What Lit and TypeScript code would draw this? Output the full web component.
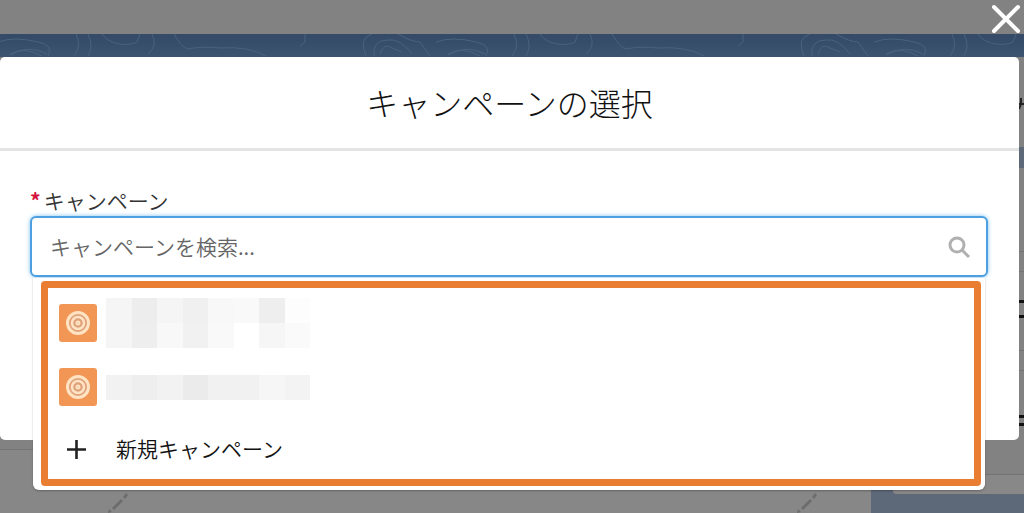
import { LitElement, html, svg, css } from "lit";
import { customElement, state } from "lit/decorators.js";

interface Campaign {
  id: string;
  rows: string[][];
}

const CAMPAIGNS: Campaign[] = [
  {
    id: "campaign-1",
    rows: [
      ["#f5f5f5", "#ededed", "#f5f5f5", "#f0f0f0", "#f8f8f8", "#f9f9f9", "#eeeeee", "#fdfdfd"],
      ["#f5f5f5", "#eeeeee", "#f8f8f8", "#f1f1f1", "#f9f9f9", "#ffffff", "#f6f6f6", "#fafafa"],
    ],
  },
  {
    id: "campaign-2",
    rows: [["#f2f2f2", "#eeeeee", "#f2f2f2", "#ebebeb", "#f1f1f1", "#f1f1f1", "#f6f6f6", "#f3f3f3"]],
  },
];

const contour = (x: number) => svg`
  <g transform="translate(${x} 0)">
    <path d="M-2 8Q14 2 38 8Q54 11 48 22M10 21Q28 10 47 20M76 0Q82 12 74 22M88 0Q94 12 88 22"/>
    <path d="M102 0C110 12 130 12 137 8L140 0M152 0Q158 12 148 20M174 0Q182 14 188 15Q202 12 220 14Q248 12 266 22"/>
    <path d="M300 12L305 8V0M366 22Q358 4 372 0M374 22Q372 6 388 6Q400 4 412 20M380 20Q384 8 392 14L402 18"/>
    <path d="M398 0Q412 8 420 8L430 22M448 20Q462 12 480 22"/>
  </g>`;

const pencil = html`<svg class="pencil" viewBox="0 0 20 20" aria-hidden="true">
  <path d="M0 20L1 16L4 19ZM4 15L13 6L15 8L6 17ZM15 4L18 0L20 2L17 6Z"></path>
</svg>`;

@customElement("page-backdrop")
export class PageBackdrop extends LitElement {
  static styles = css`
    :host {
      display: grid;
      grid-template-rows: 34px 23px 1fr;
      background: #828282;
      overflow: hidden;
    }
    .contours {
      display: block;
      width: 100%;
      height: 23px;
      background: linear-gradient(#344a66, #3b5470);
      fill: none;
      stroke: #4a627c;
      stroke-width: 1;
    }
    .columns {
      display: grid;
      grid-template-columns: 871fr 153fr;
      min-height: 0;
    }
    .record {
      display: flex;
      align-items: flex-end;
      justify-content: space-between;
      padding: 0 54px 0 108px;
      background: linear-gradient(#828282 392px, #757575 392px 393px, #878787 393px);
    }
    .pencil {
      width: 20px;
      height: 20px;
      fill: #6c6c6c;
    }
    .side {
      background: #5d6879;
    }
    .panel {
      display: block;
      width: 100%;
      height: 437px;
    }
  `;

  render() {
    return html`
      <div></div>
      <svg class="contours" viewBox="0 0 1024 23" preserveAspectRatio="xMidYMid slice" aria-hidden="true">
        ${[-438, 0, 438, 876].map(contour)}
      </svg>
      <div class="columns">
        <div class="record">${pencil}${pencil}</div>
        <div class="side">
          <svg class="panel" viewBox="0 0 153 437" preserveAspectRatio="xMaxYMin slice" aria-hidden="true">
            <path fill="#828282" d="M0 0H153V90H0ZM22 111H153V437H26Q22 437 22 433Z"></path>
            <path fill="#888" d="M22 418H153V437H26Q22 437 22 433Z"></path>
            <path stroke="#737373" d="M22 194.5H153M22 214.5H153M22 293.5H153M22 313.5H153M22 417.5H153"></path>
            <path stroke="#111" stroke-width="3" d="M148 244.5H153M148 259.5H153M148 359.5H153M148 367.5H153"></path>
            <path stroke="#222" stroke-width="2" fill="none" d="M148 47H153M150 41V47L148 52"></path>
          </svg>
        </div>
      </div>
    `;
  }
}

@customElement("campaign-lookup")
export class CampaignLookup extends LitElement {
  @state() private query = "";

  static styles = css`
    :host {
      display: block;
      font-size: 21px;
      font-weight: 350;
      line-height: 28px;
    }
    .label {
      display: flex;
      gap: 3px;
      padding-bottom: 2px;
      color: #333;
    }
    .required {
      color: #d4143c;
      font-weight: 700;
    }
    .field {
      display: flex;
      align-items: center;
      height: 57px;
      padding: 0 16px 0 18px;
      border: 2px solid #4d9fe0;
      border-radius: 6px;
      background: #fff;
      box-shadow: 0 0 4px #7cc0f2;
    }
    .input {
      flex: 1;
      min-width: 0;
      padding: 0 0 2px;
      border: 0;
      outline: 0;
      background: none;
      color: #222;
      font: inherit;
    }
    .input::placeholder {
      color: #666;
      opacity: 1;
    }
    .search {
      width: 22px;
      height: 22px;
      fill: none;
      stroke: #b0b0b0;
      stroke-width: 3;
    }
    .menu {
      margin: 1px 3px 0;
      padding: 3px 4px 4px 8px;
      border-radius: 0 0 6px 6px;
      background: #fff;
      box-shadow: 0 1px 2px #0004;
    }
    .options {
      display: flex;
      flex-direction: column;
      gap: 14px;
      padding: 10px 10px 7px 11px;
      border: 7px solid #e97e32;
      border-radius: 4px;
    }
    .option {
      display: flex;
      align-items: center;
      gap: 9px;
      width: 100%;
      height: 50px;
      padding: 0;
      border: 0;
      background: none;
      color: #111;
      font: inherit;
      text-align: left;
    }
    .create {
      height: 46px;
      gap: 19px;
    }
    .name {
      padding-bottom: 3px;
    }
    .target {
      width: 38px;
      height: 38px;
      border-radius: 3px;
      background: #f29655;
      fill: none;
      stroke: #ffe3c3;
      stroke-width: 3;
    }
    .disc {
      fill: #dfa179;
    }
    .plus {
      width: 38px;
      height: 38px;
      fill: none;
      stroke: #222;
      stroke-width: 2.6;
    }
    .masked {
      display: grid;
      width: 204px;
    }
    .row {
      display: grid;
      grid-template-columns: repeat(8, 1fr);
      grid-auto-rows: 25px;
    }
  `;

  private onInput(event: Event) {
    this.query = (event.target as HTMLInputElement).value;
  }

  render() {
    return html`
      <label class="label" for="campaign"><span class="required">*</span>キャンペーン</label>
      <div class="field">
        <input
          class="input"
          id="campaign"
          type="text"
          required
          autocomplete="off"
          placeholder="キャンペーンを検索..."
          .value=${this.query}
          @input=${this.onInput}
        />
        <svg class="search" viewBox="0 0 22 22" aria-hidden="true">
          <circle cx="9" cy="9" r="7"></circle>
          <path d="M14 14L21 21"></path>
        </svg>
      </div>
      <div class="menu">
        <div class="options">
          ${CAMPAIGNS.map(
            (campaign) => html`
              <button class="option" type="button" aria-label=${campaign.id}>
                <svg class="target" viewBox="0 0 38 38" aria-hidden="true">
                  <circle class="disc" cx="19" cy="19" r="10.5"></circle>
                  <circle cx="19" cy="19" r="6" stroke-width="2.5"></circle>
                  <circle cx="19" cy="19" r="1"></circle>
                </svg>
                <span class="masked">
                  ${campaign.rows.map(
                    (row) => html`<span class="row">
                      ${row.map((tone) => html`<span style="background:${tone}"></span>`)}
                    </span>`
                  )}
                </span>
              </button>
            `
          )}
          <button class="option create" type="button">
            <svg class="plus" viewBox="0 0 38 38" aria-hidden="true">
              <path d="M8 19.5H27M17.5 10V29"></path>
            </svg>
            <span class="name">新規キャンペーン</span>
          </button>
        </div>
      </div>
    `;
  }
}

@customElement("app-root")
export class AppRoot extends LitElement {
  static styles = css`
    :host {
      display: grid;
      min-height: 100vh;
      font-family: "Noto Sans CJK JP", sans-serif;
    }
    .backdrop,
    .layer {
      grid-area: 1 / 1;
      min-width: 0;
    }
    .layer {
      z-index: 1;
      display: flex;
      flex-direction: column;
    }
    .top {
      display: flex;
      justify-content: flex-end;
      height: 57px;
      box-sizing: border-box;
      padding: 4px 3px 0 0;
    }
    .close {
      width: 30px;
      height: 30px;
      padding: 0;
      border: 0;
      background: none;
    }
    .close-icon {
      display: block;
      width: 30px;
      height: 30px;
      fill: none;
      stroke: #fff;
      stroke-width: 4;
      stroke-linecap: round;
    }
    .modal {
      height: 383px;
      margin-right: 5px;
      border-radius: 5px;
      background: #fff;
    }
    .header {
      padding: 22px 0 23px;
      border-bottom: 3px solid #e4e4e4;
    }
    .title {
      margin: 0;
      color: #111;
      font-size: 32px;
      font-weight: 300;
      line-height: 46px;
      text-align: center;
    }
    .body {
      padding: 35px 31px 0 30px;
    }
  `;

  render() {
    return html`
      <page-backdrop class="backdrop" aria-hidden="true"></page-backdrop>
      <div class="layer">
        <div class="top">
          <button class="close" type="button" aria-label="閉じる">
            <svg class="close-icon" viewBox="0 0 30 30" aria-hidden="true">
              <path d="M3 3L27 27M27 3L3 27"></path>
            </svg>
          </button>
        </div>
        <section class="modal" role="dialog" aria-labelledby="title">
          <header class="header"><h1 class="title" id="title">キャンペーンの選択</h1></header>
          <div class="body"><campaign-lookup></campaign-lookup></div>
        </section>
      </div>
    `;
  }
}
